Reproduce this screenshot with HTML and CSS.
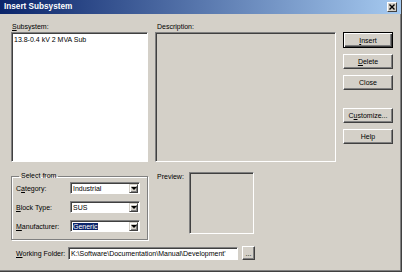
FILE: index.html
```html
<!DOCTYPE html>
<html lang="en">
<head>
    <meta charset="UTF-8">
    <title>Insert Subsystem</title>
    <link rel="stylesheet" href="styles.css">
</head>
<body>
    <div class="dialog">
        <div class="titlebar">
            <span class="title">Insert Subsystem</span>
            <span class="close-btn">
                <svg width="6" height="6" viewBox="0 0 6 6"><path d="M0.5 0.5 L5.5 5.5 M5.5 0.5 L0.5 5.5" stroke="#000" stroke-width="1.4"/></svg>
            </span>
        </div>

        <div class="content">
            <div class="top-row">
                <div class="col-list">
                    <div class="label"><u>S</u>ubsystem:</div>
                    <div class="listbox">
                        <div class="item">13.8-0.4 kV 2 MVA Sub</div>
                    </div>
                </div>
                <div class="col-desc">
                    <div class="label">Description:</div>
                    <div class="panel desc"></div>
                </div>
                <div class="col-buttons">
                    <div class="btn default"><u>I</u>nsert</div>
                    <div class="btn"><u>D</u>elete</div>
                    <div class="btn">Close</div>
                    <div class="btn spaced">C<u>u</u>stomize...</div>
                    <div class="btn">Help</div>
                </div>
            </div>

            <div class="bottom-row">
                <fieldset class="group">
                    <legend>Select from</legend>
                    <div class="field">
                        <span class="field-label">C<u>a</u>tegory:</span>
                        <div class="combo"><span class="combo-text">Industrial</span><span class="arrow"></span></div>
                    </div>
                    <div class="field">
                        <span class="field-label"><u>B</u>lock Type:</span>
                        <div class="combo"><span class="combo-text">SUS</span><span class="arrow"></span></div>
                    </div>
                    <div class="field">
                        <span class="field-label"><u>M</u>anufacturer:</span>
                        <div class="combo"><span class="combo-text"><span class="selected">Generic</span></span><span class="arrow"></span></div>
                    </div>
                </fieldset>
                <div class="preview">
                    <span class="preview-label">Preview:</span>
                    <div class="panel preview-box"></div>
                </div>
            </div>

            <div class="folder-row">
                <span class="folder-label"><u>W</u>orking Folder:</span>
                <div class="textbox">K:\Software\Documentation\Manual\Development'</div>
                <div class="btn browse">...</div>
            </div>
        </div>
    </div>
</body>
</html>
```

FILE: styles.css
```css
body {
    margin: 0;
    font-family: "Liberation Sans", Arial, sans-serif;
    font-size: 7px;
    color: #000;
}
.dialog {
    width: 402px;
    height: 272px;
    box-sizing: border-box;
    background-color: #d4d0c8;
    border-right: 1px solid #404040;
    border-bottom: 1px solid #404040;
    box-shadow: inset -1px -1px 0 #808080;
    overflow: hidden;
}
.titlebar {
    height: 14px;
    display: flex;
    align-items: center;
    justify-content: space-between;
    padding: 0 4px 0 4px;
    background: linear-gradient(to right, #0a246a, #a6caf0);
}
.title {
    color: #fff;
    font-weight: bold;
    font-size: 8.2px;
    line-height: 14px;
}
.close-btn {
    width: 10px;
    height: 10px;
    box-sizing: border-box;
    display: flex;
    align-items: center;
    justify-content: center;
    background-color: #d4d0c8;
    border-top: 1px solid #fff;
    border-left: 1px solid #fff;
    border-right: 1px solid #404040;
    border-bottom: 1px solid #404040;
}
.content {
    padding: 8px 0 0 11px;
}
.top-row {
    display: flex;
}
.label {
    height: 10px;
    line-height: 10px;
    padding-left: 1px;
}
.col-list {
    width: 137px;
}
.listbox {
    height: 130px;
    box-sizing: border-box;
    background-color: #fff;
    border-top: 1px solid #808080;
    border-left: 1px solid #808080;
    border-right: 1px solid #fff;
    border-bottom: 1px solid #fff;
    box-shadow: inset 1px 1px 0 #404040;
    padding: 2px 2px;
}
.item {
    line-height: 9px;
}
.col-desc {
    width: 181px;
    margin-left: 7px;
}
.col-desc .label {
    padding-left: 2px;
}
.panel {
    box-sizing: border-box;
    border-top: 1px solid #808080;
    border-left: 1px solid #808080;
    border-right: 1px solid #fff;
    border-bottom: 1px solid #fff;
    box-shadow: inset 1px 1px 0 #404040;
}
.desc {
    height: 130px;
}
.col-buttons {
    width: 50px;
    margin-left: 7px;
    padding-top: 10px;
    display: flex;
    flex-direction: column;
    gap: 6px;
}
.btn {
    height: 15px;
    box-sizing: border-box;
    display: flex;
    align-items: center;
    justify-content: center;
    background-color: #d4d0c8;
    border-top: 1px solid #fff;
    border-left: 1px solid #fff;
    border-right: 1px solid #404040;
    border-bottom: 1px solid #404040;
    box-shadow: inset -1px -1px 0 #808080;
}
.btn.default {
    height: 16px;
    border: 1px solid #000;
    box-shadow: inset 1px 1px 0 #fff, inset -1px -1px 0 #404040, inset -2px -2px 0 #808080;
}
.btn.spaced {
    margin-top: 12px;
}
.bottom-row {
    display: flex;
    margin-top: 10px;
}
.group {
    width: 137px;
    box-sizing: border-box;
    margin: 0;
    padding: 2px 0 7px 4px;
    min-width: 0;
    border: 1px solid #808080;
    box-shadow: 1px 1px 0 #fff, inset 1px 1px 0 #fff;
    display: flex;
    flex-direction: column;
    gap: 7px;
}
.group legend {
    padding: 0 2px;
    margin-left: 3px;
    line-height: 8px;
}
.field {
    display: flex;
    align-items: center;
}
.field-label {
    width: 54px;
}
.combo {
    width: 70px;
    height: 12px;
    box-sizing: border-box;
    display: flex;
    align-items: center;
    background-color: #fff;
    border-top: 1px solid #808080;
    border-left: 1px solid #808080;
    border-right: 1px solid #fff;
    border-bottom: 1px solid #fff;
    box-shadow: inset 1px 1px 0 #404040;
    padding: 1px 1px 0 2px;
}
.combo-text {
    flex: 1;
    line-height: 9px;
}
.selected {
    background-color: #0a246a;
    color: #fff;
}
.arrow {
    width: 9px;
    height: 9px;
    box-sizing: border-box;
    display: flex;
    align-items: center;
    justify-content: center;
    background-color: #d4d0c8;
    border-top: 1px solid #d4d0c8;
    border-left: 1px solid #d4d0c8;
    border-right: 1px solid #404040;
    border-bottom: 1px solid #404040;
    box-shadow: inset 1px 1px 0 #fff, inset -1px -1px 0 #808080;
}
.arrow::after {
    content: "";
    border-left: 3px solid transparent;
    border-right: 3px solid transparent;
    border-top: 3px solid #000;
}
.preview {
    display: flex;
    margin-left: 9px;
}
.preview-label {
    width: 32px;
    line-height: 8px;
    margin-top: 1px;
}
.preview-box {
    width: 65px;
    height: 62px;
}
.folder-row {
    display: flex;
    align-items: center;
    margin-top: 6px;
    padding-left: 5px;
}
.folder-label {
    width: 52px;
}
.textbox {
    width: 170px;
    height: 13px;
    box-sizing: border-box;
    background-color: #fff;
    border-top: 1px solid #808080;
    border-left: 1px solid #808080;
    border-right: 1px solid #fff;
    border-bottom: 1px solid #fff;
    box-shadow: inset 1px 1px 0 #404040;
    padding: 0 2px;
    line-height: 11px;
    white-space: nowrap;
    overflow: hidden;
}
.btn.browse {
    width: 13px;
    height: 14px;
    margin-left: 4px;
    align-items: flex-end;
    padding-bottom: 2px;
}
```
